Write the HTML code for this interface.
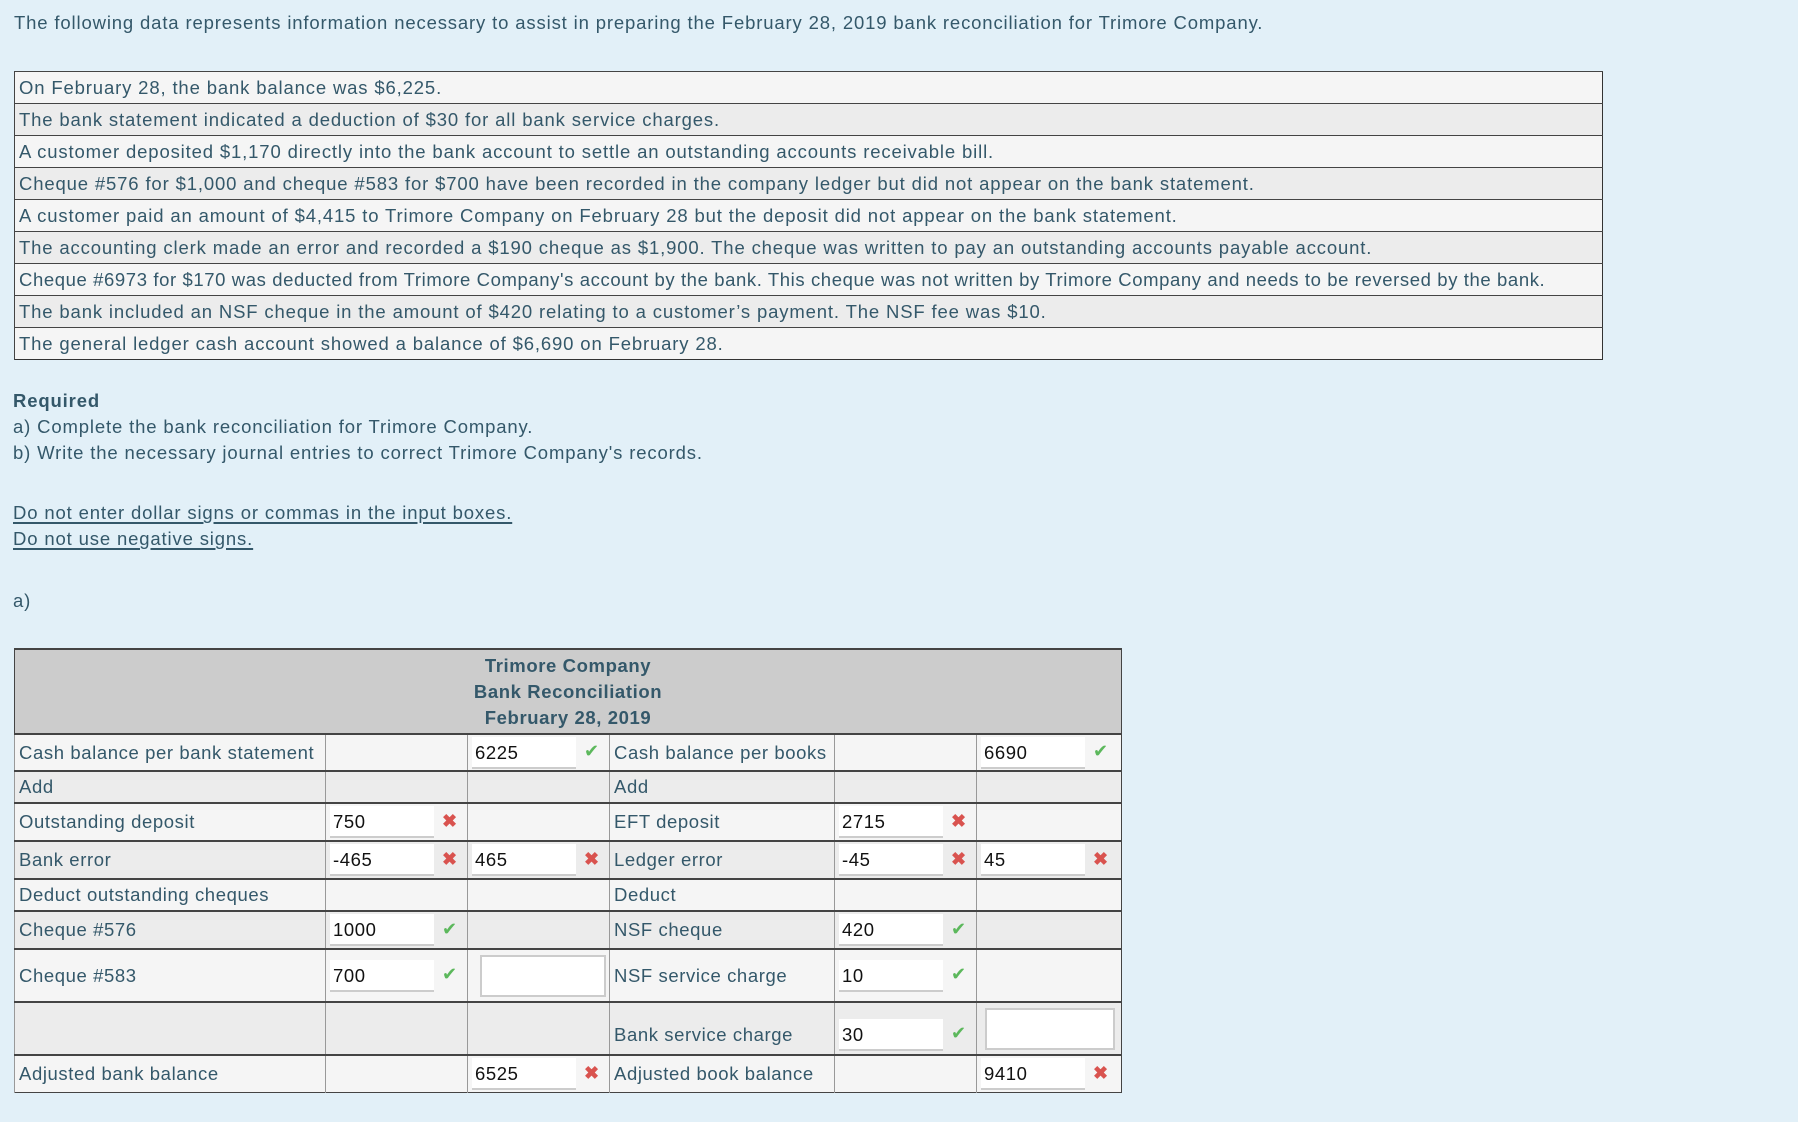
<!DOCTYPE html>
<html><head><meta charset="utf-8"><style>
html,body{margin:0;padding:0;}
body{width:1798px;height:1122px;background:#e2f0f8;font-family:"Liberation Sans",sans-serif;font-size:18.5px;letter-spacing:0.85px;color:#34586a;position:relative;overflow:hidden;}
.abs{position:absolute;white-space:nowrap;}
table{border-collapse:collapse;position:absolute;}
.data{left:14px;top:71px;width:1589px;border:1.5px solid #333;}
.data td{height:31px;padding:0 4px;border-top:1.5px solid #444;border-left:1.5px solid #444;}
.data tr:nth-child(odd) td{background:#f5f5f5}
.data tr:nth-child(even) td{background:#ececec}
.rec{left:14px;top:648px;width:1107px;border:1.5px solid #444;table-layout:fixed;}
.rec td{border-top:2px solid #444;border-left:1.5px solid #999;padding:0 4px;position:relative;letter-spacing:0.6px}
.rec tr:nth-child(even) td{background:#f5f5f5}
.rec tr:nth-child(odd) td{background:#ececec}
.rec tr.h td{background:#cccccc;text-align:center;font-weight:bold;line-height:26px;padding:3px 0 2px;border-left:none}
.in{display:inline-block;width:104px;height:32px;background:#fff;border-bottom:2px solid #ccc;color:#111;line-height:32px;padding-left:3px;box-sizing:border-box;vertical-align:middle;}
.ok{color:#5cb85c;margin-left:8px;font-size:18px}
.no{color:#d9534f;font-weight:bold;margin-left:8px;font-size:18px}
.empty{display:inline-block;width:126px;height:42px;background:#fff;border:2px solid #ccc;box-sizing:border-box;vertical-align:middle;margin-left:8px}
u{text-decoration-thickness:1.5px;text-underline-offset:3px}
</style></head><body>
<div class="abs" style="left:14px;top:12px">The following data represents information necessary to assist in preparing the February 28, 2019 bank reconciliation for Trimore Company.</div>
<table class="data">
<tr><td>On February 28, the bank balance was $6,225.</td></tr>
<tr><td>The bank statement indicated a deduction of $30 for all bank service charges.</td></tr>
<tr><td>A customer deposited $1,170 directly into the bank account to settle an outstanding accounts receivable bill.</td></tr>
<tr><td>Cheque #576 for $1,000 and cheque #583 for $700 have been recorded in the company ledger but did not appear on the bank statement.</td></tr>
<tr><td>A customer paid an amount of $4,415 to Trimore Company on February 28 but the deposit did not appear on the bank statement.</td></tr>
<tr><td>The accounting clerk made an error and recorded a $190 cheque as $1,900. The cheque was written to pay an outstanding accounts payable account.</td></tr>
<tr><td style="letter-spacing:0.6px">Cheque #6973 for $170 was deducted from Trimore Company's account by the bank. This cheque was not written by Trimore Company and needs to be reversed by the bank.</td></tr>
<tr><td>The bank included an NSF cheque in the amount of $420 relating to a customer’s payment. The NSF fee was $10.</td></tr>
<tr><td>The general ledger cash account showed a balance of $6,690 on February 28.</td></tr>
</table>
<div class="abs" style="left:13px;top:390px;font-weight:bold">Required</div>
<div class="abs" style="left:13px;top:416px">a) Complete the bank reconciliation for Trimore Company.</div>
<div class="abs" style="left:13px;top:442px">b) Write the necessary journal entries to correct Trimore Company's records.</div>
<div class="abs" style="left:13px;top:502px"><u>Do not enter dollar signs or commas in the input boxes.</u></div>
<div class="abs" style="left:13px;top:528px"><u>Do not use negative signs.</u></div>
<div class="abs" style="left:13px;top:590px">a)</div>
<table class="rec">
<colgroup><col style="width:311px"><col style="width:142px"><col style="width:142px"><col style="width:225px"><col style="width:142px"><col style="width:145px"></colgroup>
<tr class="h"><td colspan="6">Trimore Company<br>Bank Reconciliation<br>February 28, 2019</td></tr>
<tr style="height:37px"><td>Cash balance per bank statement</td><td></td><td><span class="in">6225</span><span class="ok">✔</span></td><td>Cash balance per books</td><td></td><td><span class="in">6690</span><span class="ok">✔</span></td></tr>
<tr style="height:32px"><td>Add</td><td></td><td></td><td>Add</td><td></td><td></td></tr>
<tr style="height:38px"><td>Outstanding deposit</td><td><span class="in">750</span><span class="no">✖</span></td><td></td><td>EFT deposit</td><td><span class="in">2715</span><span class="no">✖</span></td><td></td></tr>
<tr style="height:38px"><td>Bank error</td><td><span class="in">-465</span><span class="no">✖</span></td><td><span class="in">465</span><span class="no">✖</span></td><td>Ledger error</td><td><span class="in">-45</span><span class="no">✖</span></td><td><span class="in">45</span><span class="no">✖</span></td></tr>
<tr style="height:32px"><td>Deduct outstanding cheques</td><td></td><td></td><td>Deduct</td><td></td><td></td></tr>
<tr style="height:38px"><td>Cheque #576</td><td><span class="in">1000</span><span class="ok">✔</span></td><td></td><td>NSF cheque</td><td><span class="in">420</span><span class="ok">✔</span></td><td></td></tr>
<tr style="height:53px"><td>Cheque #583</td><td><span class="in">700</span><span class="ok">✔</span></td><td><span class="empty"></span></td><td>NSF service charge</td><td><span class="in">10</span><span class="ok">✔</span></td><td></td></tr>
<tr style="height:53px"><td></td><td></td><td></td><td style="padding-top:12px">Bank service charge</td><td style="padding-top:12px"><span class="in">30</span><span class="ok">✔</span></td><td><span class="empty" style="margin-left:4px;width:130px"></span></td></tr>
<tr style="height:37px"><td>Adjusted bank balance</td><td></td><td><span class="in">6525</span><span class="no">✖</span></td><td>Adjusted book balance</td><td></td><td><span class="in">9410</span><span class="no">✖</span></td></tr>
</table>
</body></html>
